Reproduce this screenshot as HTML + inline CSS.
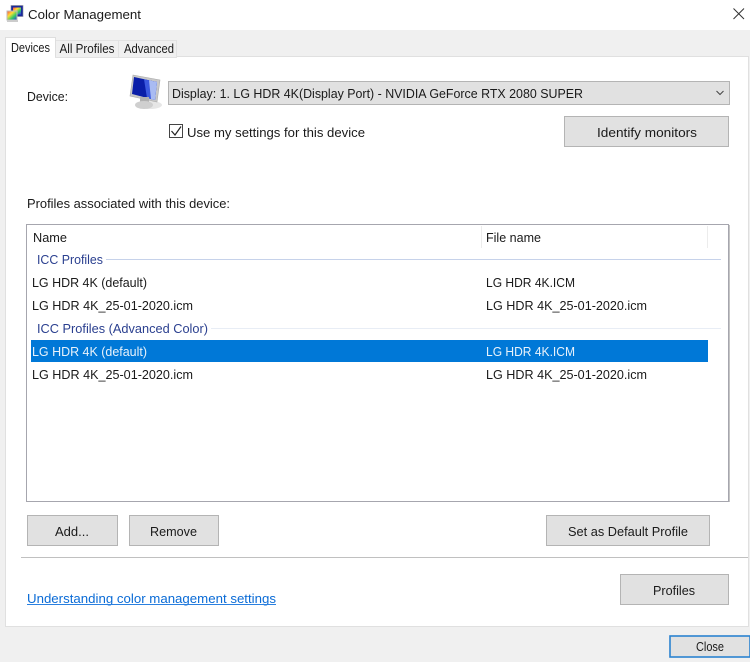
<!DOCTYPE html>
<html><head><meta charset="utf-8"><title>Color Management</title>
<style>
html,body{margin:0;padding:0;width:750px;height:662px;overflow:hidden;background:#f0f0f0}
svg{display:block;filter:blur(.25px)}
text{font-family:"Liberation Sans",sans-serif;font-size:13px;fill:#1a1a1a}
.b{fill:#e1e1e1;stroke:#b4b4b4;stroke-width:1}
</style></head><body>
<svg width="750" height="662" viewBox="0 0 750 662" xmlns="http://www.w3.org/2000/svg">
<defs>
<linearGradient id="rb" x1="0" y1="0" x2="1" y2="1"><stop offset="0" stop-color="#f44"/><stop offset=".35" stop-color="#fd3"/><stop offset=".65" stop-color="#3c6"/><stop offset="1" stop-color="#33e"/></linearGradient>
</defs>
<rect width="750" height="662" fill="#f0f0f0"/>
<rect width="750" height="30" fill="#fff"/>
<!-- title icon -->
<rect x="11" y="5.500" width="12" height="11" fill="#1a2a9a" stroke="#889" stroke-width=".6"/>
<rect x="13" y="7.500" width="8" height="7" fill="url(#rb)"/>
<rect x="7" y="11" width="10" height="9" fill="url(#rb)" stroke="#bbb" stroke-width="1"/>
<rect x="7" y="20" width="11" height="2" fill="#ccc"/>
<text x="28" y="19" textLength="113" lengthAdjust="spacingAndGlyphs">Color Management</text>
<path d="M733.500 8.500L744 19M744 8.500L733.500 19" stroke="#333" stroke-width="1" fill="none"/>
<!-- panel -->
<rect x="5.500" y="56.500" width="743" height="570" fill="#fff" stroke="#e0e0e0"/>
<!-- tabs -->
<rect x="55.500" y="40.500" width="63" height="17" fill="#f0f0f0" stroke="#e2e2e2"/>
<rect x="118.500" y="40.500" width="58" height="17" fill="#f0f0f0" stroke="#e2e2e2"/>
<path d="M5.500 57V37.500H55.500V57" fill="#fff" stroke="#dedede"/>
<rect x="6" y="55" width="49" height="3" fill="#fff"/>
<text x="11" y="52" textLength="39" lengthAdjust="spacingAndGlyphs">Devices</text>
<text x="59.500" y="53" textLength="55" lengthAdjust="spacingAndGlyphs">All Profiles</text>
<text x="124" y="53" textLength="50" lengthAdjust="spacingAndGlyphs">Advanced</text>
<!-- device row -->
<text x="27" y="101" textLength="41" lengthAdjust="spacingAndGlyphs">Device:</text>
<ellipse cx="150" cy="105" rx="12" ry="4" fill="#e6e6e6"/>
<path d="M133 75L160 80L157 102L130 96Z" fill="#c8c8c8" stroke="#aaa" stroke-width=".6"/>
<path d="M134 77L157 82L155 100L132 94Z" fill="#0a1ea8"/>
<path d="M144 79.200L157 82L155 100L147 98Z" fill="#3c5adf"/>
<path d="M149 80.300L157 82L155 100L151 99Z" fill="#a9bbf2"/>
<rect x="140" y="97" width="9" height="6" fill="#b0b0b0"/>
<ellipse cx="144" cy="105" rx="9" ry="4" fill="#cfcfcf"/>
<rect class="b" x="168.500" y="81.500" width="561" height="23"/>
<text x="172" y="98" textLength="411" lengthAdjust="spacingAndGlyphs">Display: 1. LG HDR 4K(Display Port) - NVIDIA GeForce RTX 2080 SUPER</text>
<path d="M716.500 91L720 94.500L723.500 91" stroke="#444" fill="none"/>
<rect x="169.500" y="124.500" width="13" height="13" fill="#fff" stroke="#444"/>
<path d="M171.500 131L175 135L181 126.500" stroke="#222" stroke-width="1.200" fill="none"/>
<text x="187" y="137" textLength="178" lengthAdjust="spacingAndGlyphs">Use my settings for this device</text>
<rect class="b" x="564.500" y="116.500" width="164" height="30"/>
<text x="597" y="137" textLength="100" lengthAdjust="spacingAndGlyphs">Identify monitors</text>
<text x="27" y="208" textLength="203" lengthAdjust="spacingAndGlyphs">Profiles associated with this device:</text>
<!-- list -->
<rect x="26.500" y="224.500" width="702" height="277" fill="#fff" stroke="#a6a6ae"/>
<path d="M729.500 225V502" stroke="#c4c4c4"/>
<text x="33" y="242" textLength="34" lengthAdjust="spacingAndGlyphs">Name</text>
<text x="486" y="242" textLength="55" lengthAdjust="spacingAndGlyphs">File name</text>
<path d="M481.500 226V248M707.500 226V248" stroke="#ececec"/>
<text x="37" y="264" textLength="66" lengthAdjust="spacingAndGlyphs" style="fill:#2a3f8f">ICC Profiles</text>
<path d="M106 259.500H721" stroke="#c6d2ea"/>
<text x="32" y="287" textLength="115" lengthAdjust="spacingAndGlyphs">LG HDR 4K (default)</text>
<text x="486" y="287" textLength="89" lengthAdjust="spacingAndGlyphs">LG HDR 4K.ICM</text>
<text x="32" y="310" textLength="161" lengthAdjust="spacingAndGlyphs">LG HDR 4K_25-01-2020.icm</text>
<text x="486" y="310" textLength="161" lengthAdjust="spacingAndGlyphs">LG HDR 4K_25-01-2020.icm</text>
<text x="37" y="333" textLength="171" lengthAdjust="spacingAndGlyphs" style="fill:#2a3f8f">ICC Profiles (Advanced Color)</text>
<path d="M211 328.500H721" stroke="#e8edf5"/>
<rect x="31" y="340" width="677" height="22" fill="#0078d7"/>
<text x="32" y="356" textLength="115" lengthAdjust="spacingAndGlyphs" style="fill:#e8f2fb">LG HDR 4K (default)</text>
<text x="486" y="356" textLength="89" lengthAdjust="spacingAndGlyphs" style="fill:#e8f2fb">LG HDR 4K.ICM</text>
<text x="32" y="379" textLength="161" lengthAdjust="spacingAndGlyphs">LG HDR 4K_25-01-2020.icm</text>
<text x="486" y="379" textLength="161" lengthAdjust="spacingAndGlyphs">LG HDR 4K_25-01-2020.icm</text>
<!-- buttons -->
<rect class="b" x="27.500" y="515.500" width="90" height="30"/>
<text x="55" y="536" textLength="34" lengthAdjust="spacingAndGlyphs">Add...</text>
<rect class="b" x="129.500" y="515.500" width="89" height="30"/>
<text x="150" y="536" textLength="47" lengthAdjust="spacingAndGlyphs">Remove</text>
<rect class="b" x="546.500" y="515.500" width="163" height="30"/>
<text x="568" y="536" textLength="120" lengthAdjust="spacingAndGlyphs">Set as Default Profile</text>
<path d="M21 557.500H748" stroke="#c0c0c0"/>
<text x="27" y="603" textLength="249" lengthAdjust="spacingAndGlyphs" style="fill:#0a6bd6">Understanding color management settings</text>
<path d="M27 604.500H276" stroke="#2a80e0"/>
<rect class="b" x="620.500" y="574.500" width="108" height="30"/>
<text x="653" y="595" textLength="42" lengthAdjust="spacingAndGlyphs">Profiles</text>
<rect x="670" y="636" width="80" height="21" fill="#e1e1e1" stroke="#2b83d0" stroke-width="1.600"/>
<text x="696" y="651" textLength="28" lengthAdjust="spacingAndGlyphs">Close</text>
</svg>
</body></html>
